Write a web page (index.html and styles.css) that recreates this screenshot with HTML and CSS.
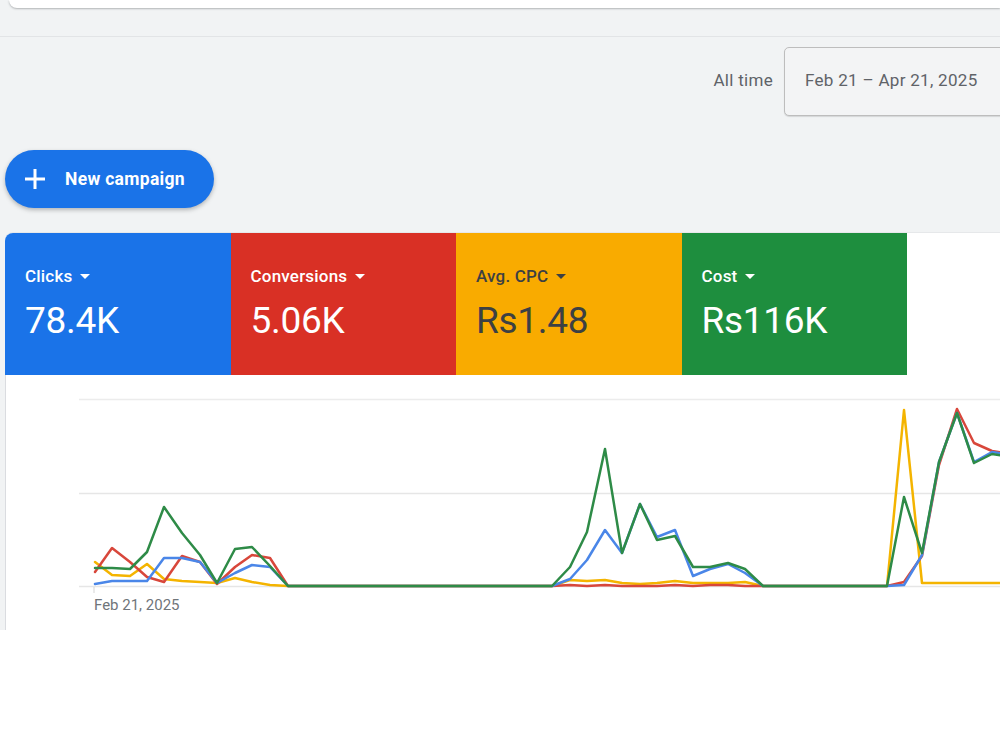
FILE: index.html
```html
<!DOCTYPE html>
<html lang="en">
<head>
<meta charset="utf-8">
<title>Campaigns overview</title>
<link rel="stylesheet" href="styles.css">
</head>
<body>
<div class="page">
  <div class="topbar"></div>
  <div class="divider"></div>
  <div class="toolbar">
    <span class="range-label">All time</span>
    <div class="date-box">Feb 21 – Apr 21, 2025</div>
  </div>
  <button class="new-btn">
    <svg class="plus" viewBox="0 0 22 22" width="22" height="22"><path d="M11 1v20M1 11h20" stroke="#fff" stroke-width="3" fill="none"/></svg>
    <span>New campaign</span>
  </button>
  <section class="panel">
    <div class="metrics">
      <div class="metric m-blue">
        <div class="m-label">Clicks <span class="caret"></span></div>
        <div class="m-value">78.4K</div>
      </div>
      <div class="metric m-red">
        <div class="m-label">Conversions <span class="caret"></span></div>
        <div class="m-value">5.06K</div>
      </div>
      <div class="metric m-yellow">
        <div class="m-label">Avg. CPC <span class="caret"></span></div>
        <div class="m-value">Rs1.48</div>
      </div>
      <div class="metric m-green">
        <div class="m-label">Cost <span class="caret"></span></div>
        <div class="m-value">Rs116K</div>
      </div>
    </div>
    <div class="chart">
      <svg class="chart-svg" viewBox="5 375 995 255" width="995" height="255">
        <line x1="79" y1="399.5" x2="1000" y2="399.5" stroke="#ececec" stroke-width="1.5"/>
        <line x1="79" y1="493.5" x2="1000" y2="493.5" stroke="#e6e6e6" stroke-width="1.5"/>
        <line x1="79" y1="586.5" x2="1000" y2="586.5" stroke="#e6e6e6" stroke-width="1.5"/>
        <line x1="94" y1="587" x2="94" y2="593" stroke="#d5d5d5" stroke-width="1"/>
        <text x="94" y="610" class="axis">Feb 21, 2025</text>
        <polyline class="ln" stroke="#f4b400" points="95,562 112,575 130,576 147,564 164,579 182,581 200,582 217,583 235,578 252,582 270,585 288,586 552,586 570,580 587,581 605,580 622,583 640,584 657,583 675,581 693,583 710,583 728,583 745,582 763,586 887,586 904,410 922,583 1010,583"/>
        <polyline class="ln" stroke="#d8473b" points="95,572 112,548 130,562 147,577 164,582 182,556 200,562 217,584 235,567 252,555 270,558 288,586 552,586 570,585 587,586 605,585 622,586 640,586 657,586 675,585 693,586 710,585 728,585 745,586 763,586 887,586 904,582 922,556 939,465 957,409 974,443 992,451 1010,454"/>
        <polyline class="ln" stroke="#4a86e8" points="95,584 112,581 130,581 147,581 164,558 182,558 200,562 217,583 235,573 252,565 270,567 288,586 552,586 570,579 587,560 605,530 622,553 640,504 657,537 675,530 693,576 710,569 728,564 745,573 763,586 887,586 904,585 922,555 939,462 957,413 974,462 992,452 1010,455"/>
        <polyline class="ln" stroke="#2e8b47" points="95,568 112,568 130,569 147,552 164,507 182,533 200,555 217,583 235,549 252,547 270,566 288,586 552,586 570,567 587,532 605,449 622,553 640,504 657,540 675,536 693,567 710,567 728,563 745,569 763,586 887,586 904,497 922,553 939,462 957,413 974,463 992,454 1010,457"/>
      </svg>
    </div>
  </section>
</div>
</body>
</html>
```

FILE: styles.css
```css
* { box-sizing: border-box; }

body {
  margin: 0;
  background: #ffffff;
  font-family: Roboto, "Liberation Sans", Arial, sans-serif;
}

.page {
  background: #f1f3f4;
  height: 630px;
  overflow: hidden;
  display: flex;
  flex-direction: column;
  align-items: flex-start;
}

.topbar {
  align-self: stretch;
  margin-left: 9px;
  height: 8px;
  background: #ffffff;
  border-bottom-left-radius: 8px;
  box-shadow: 0 1px 2px rgba(60, 64, 67, 0.35);
}

.divider {
  align-self: stretch;
  margin-top: 28px;
  height: 1px;
  background: #e2e4e6;
}

.toolbar {
  align-self: stretch;
  display: flex;
  justify-content: flex-end;
  align-items: center;
  gap: 11px;
  margin-top: 10px;
}

.range-label {
  font-size: 17px;
  letter-spacing: 0.3px;
  color: #5f6368;
  margin-top: -3px;
}

.date-box {
  width: 236px;
  height: 69px;
  margin-right: -20px;
  border: 1.5px solid #bdbdbd;
  border-radius: 5px;
  background: #f3f4f5;
  box-shadow: 0 1px 1px rgba(0, 0, 0, 0.12);
  display: flex;
  align-items: center;
  padding: 0 0 3px 20px;
  font-size: 17px;
  letter-spacing: 0.3px;
  color: #5f6368;
}

.new-btn {
  margin-top: 34px;
  margin-left: 5px;
  width: 209px;
  height: 58px;
  border: none;
  border-radius: 29px;
  background: #1a73e8;
  box-shadow: 0 2px 4px rgba(60, 64, 67, 0.35);
  display: flex;
  align-items: center;
  gap: 19px;
  padding: 0 0 0 19px;
  color: #ffffff;
  font-family: Roboto, "Liberation Sans", Arial, sans-serif;
  font-size: 17.5px;
  font-weight: 700;
  letter-spacing: 0.3px;
}

.plus { flex: none; }

.panel {
  align-self: stretch;
  margin-top: 25px;
  margin-left: 5px;
  background: #ffffff;
  border-top-left-radius: 8px;
  overflow: hidden;
  flex: 1;
  box-shadow: 0 -1px 0 #e6e8ea;
}

.metrics {
  display: flex;
  height: 142px;
}

.metric {
  width: 225.5px;
  padding: 33px 0 0 20px;
  color: #ffffff;
}

.m-blue { background: #1a73e8; }
.m-red { background: #d93025; }
.m-yellow { background: #f9ab00; color: #3c4043; }
.m-green { background: #1e8e3e; }

.m-label {
  font-size: 17px;
  line-height: 20px;
  font-weight: 500;
  letter-spacing: 0.2px;
  display: flex;
  align-items: center;
  gap: 8px;
}

.caret {
  width: 0;
  height: 0;
  border-left: 5px solid transparent;
  border-right: 5px solid transparent;
  border-top: 5px solid currentColor;
}

.m-value {
  margin-top: 14px;
  font-size: 37px;
  line-height: 42px;
  font-weight: 400;
  letter-spacing: -0.3px;
}

.chart {
  height: 255px;
  border-left: 1px solid #dadce0;
}

.chart-svg { display: block; margin-left: -1px; }

.axis {
  font-family: Roboto, "Liberation Sans", Arial, sans-serif;
  font-size: 15px;
  fill: #70757a;
}

.ln {
  fill: none;
  stroke-width: 2.5;
  stroke-linejoin: round;
  stroke-linecap: round;
}
```
